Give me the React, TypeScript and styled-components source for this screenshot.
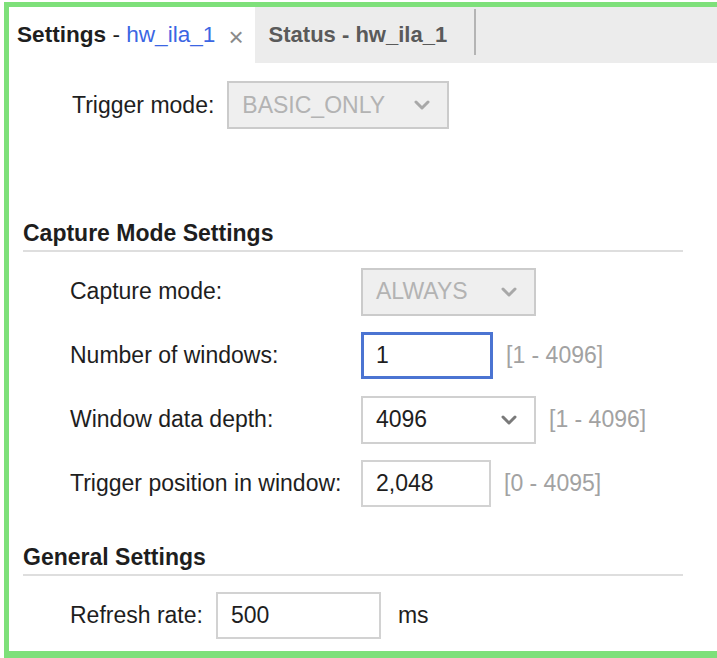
import React from "react";
import styled, { createGlobalStyle, css } from "styled-components";

const Global = createGlobalStyle`
  html, body { margin: 0; padding: 0; background: #ffffff; }
  body {
    padding: 2px 0 0 4px;
    overflow: hidden;
    font-family: "Liberation Sans", Arial, sans-serif;
    font-size: 23px;
    color: #1e1e1e;
  }
`;

const Frame = styled.div`
  box-sizing: border-box;
  width: 713px;
  height: 656px;
  border: 5px solid #7ee07a;
  border-bottom-width: 7px;
  border-right: none;
  display: flex;
  flex-direction: column;
  background: #ffffff;
`;

const TabBar = styled.div`
  height: 56px;
  flex: none;
  display: flex;
  align-items: stretch;
  background: #ececec;
`;

const Tab = styled.div<{ $active?: boolean }>`
  display: flex;
  align-items: center;
  white-space: pre;
  font-weight: 700;
  ${(p) =>
    p.$active
      ? css`
          font-size: 22.6px;
          background: #ffffff;
          color: #1e1e1e;
          padding: 0 11px 0 8px;
        `
      : css`
          font-size: 22px;
          background: #ececec;
          color: #5a5a5a;
          padding: 0 27px 0 14px;
        `}
`;

const Plain = styled.span`
  font-weight: 400;
`;

const Link = styled.span`
  font-weight: 400;
  color: #3b66e3;
`;

const Close = styled.span`
  font-weight: 400;
  color: #8a8a8a;
  font-size: 26px;
  margin-left: 13px;
  position: relative;
  top: 2px;
`;

const TabSeparator = styled.div`
  width: 2px;
  background: #b4b4b4;
  margin: 2px 0 8px;
`;

const Body = styled.div`
  flex: 1;
  display: flex;
  flex-direction: column;
  padding: 0 34px 0 14px;
`;

const TopRow = styled.div`
  display: flex;
  align-items: center;
  gap: 13px;
  margin: 18px 0 0 49px;
`;

const Section = styled.section<{ $top: number }>`
  margin-top: ${(p) => p.$top}px;
`;

const SectionTitle = styled.div`
  font-weight: 700;
  line-height: 26px;
  padding-bottom: 4px;
  border-bottom: 2px solid #dedede;
  color: #1e1e1e;
`;

const FieldGrid = styled.div`
  display: grid;
  grid-template-columns: 291px auto 1fr;
  grid-auto-rows: 47px;
  row-gap: 17px;
  align-items: center;
  margin: 16px 0 0 47px;
`;

const Label = styled.div`
  white-space: nowrap;
  color: #1e1e1e;
`;

const Control = styled.div`
  display: flex;
  align-items: center;
  gap: 13px;
`;

const Range = styled.span`
  color: #a2a2a2;
  white-space: nowrap;
`;

const Unit = styled.span`
  color: #1e1e1e;
  margin-left: 4px;
`;

const SelectBox = styled.div<{ $disabled?: boolean; $w: number }>`
  box-sizing: border-box;
  width: ${(p) => p.$w}px;
  height: 48px;
  display: flex;
  align-items: center;
  justify-content: space-between;
  padding: 0 17px 0 13px;
  border: 2px solid ${(p) => (p.$disabled ? "#cbcbcb" : "#d0d0d0")};
  background: ${(p) => (p.$disabled ? "#efefef" : "#ffffff")};
  color: ${(p) => (p.$disabled ? "#b3b3b3" : "#1e1e1e")};
`;

const InputBox = styled.div<{ $focused?: boolean; $w: number }>`
  box-sizing: border-box;
  width: ${(p) => p.$w}px;
  height: 47px;
  display: flex;
  align-items: center;
  padding-left: ${(p) => (p.$focused ? 12 : 13)}px;
  background: #ffffff;
  border: ${(p) => (p.$focused ? "3px solid #4b74d2" : "2px solid #d2d2d2")};
  color: #1e1e1e;
`;

const RefreshRow = styled.div`
  display: flex;
  align-items: center;
  gap: 13px;
  margin: 16px 0 0 47px;
`;

const Chevron = ({ color }: { color: string }) => (
  <svg width="16" height="10" viewBox="0 0 16 10" aria-hidden>
    <path d="M2 2 L8 8 L14 2" fill="none" stroke={color} strokeWidth="3" strokeLinecap="round" strokeLinejoin="round" />
  </svg>
);

const Select = ({ value, width, disabled }: { value: string; width: number; disabled?: boolean }) => (
  <SelectBox $w={width} $disabled={disabled}>
    <span>{value}</span>
    <Chevron color={disabled ? "#a8a8a8" : "#7a7a7a"} />
  </SelectBox>
);

export default function App() {
  return (
    <>
      <Global />
      <Frame>
        <TabBar>
          <Tab $active>
            Settings<Plain> - </Plain>
            <Link>hw_ila_1</Link>
            <Close>×</Close>
          </Tab>
          <Tab>Status - hw_ila_1</Tab>
          <TabSeparator />
        </TabBar>
        <Body>
          <TopRow>
            <Label>Trigger mode:</Label>
            <Select value="BASIC_ONLY" width={222} disabled />
          </TopRow>

          <Section $top={91}>
            <SectionTitle>Capture Mode Settings</SectionTitle>
            <FieldGrid>
              <Label>Capture mode:</Label>
              <Control>
                <Select value="ALWAYS" width={175} disabled />
              </Control>
              <span />

              <Label>Number of windows:</Label>
              <Control>
                <InputBox $w={132} $focused>1</InputBox>
                <Range>[1 - 4096]</Range>
              </Control>
              <span />

              <Label>Window data depth:</Label>
              <Control>
                <Select value="4096" width={175} />
                <Range>[1 - 4096]</Range>
              </Control>
              <span />

              <Label>Trigger position in window:</Label>
              <Control>
                <InputBox $w={130}>2,048</InputBox>
                <Range>[0 - 4095]</Range>
              </Control>
              <span />
            </FieldGrid>
          </Section>

          <Section $top={37}>
            <SectionTitle>General Settings</SectionTitle>
            <RefreshRow>
              <Label>Refresh rate:</Label>
              <InputBox $w={165}>500</InputBox>
              <Unit>ms</Unit>
            </RefreshRow>
          </Section>
        </Body>
      </Frame>
    </>
  );
}
